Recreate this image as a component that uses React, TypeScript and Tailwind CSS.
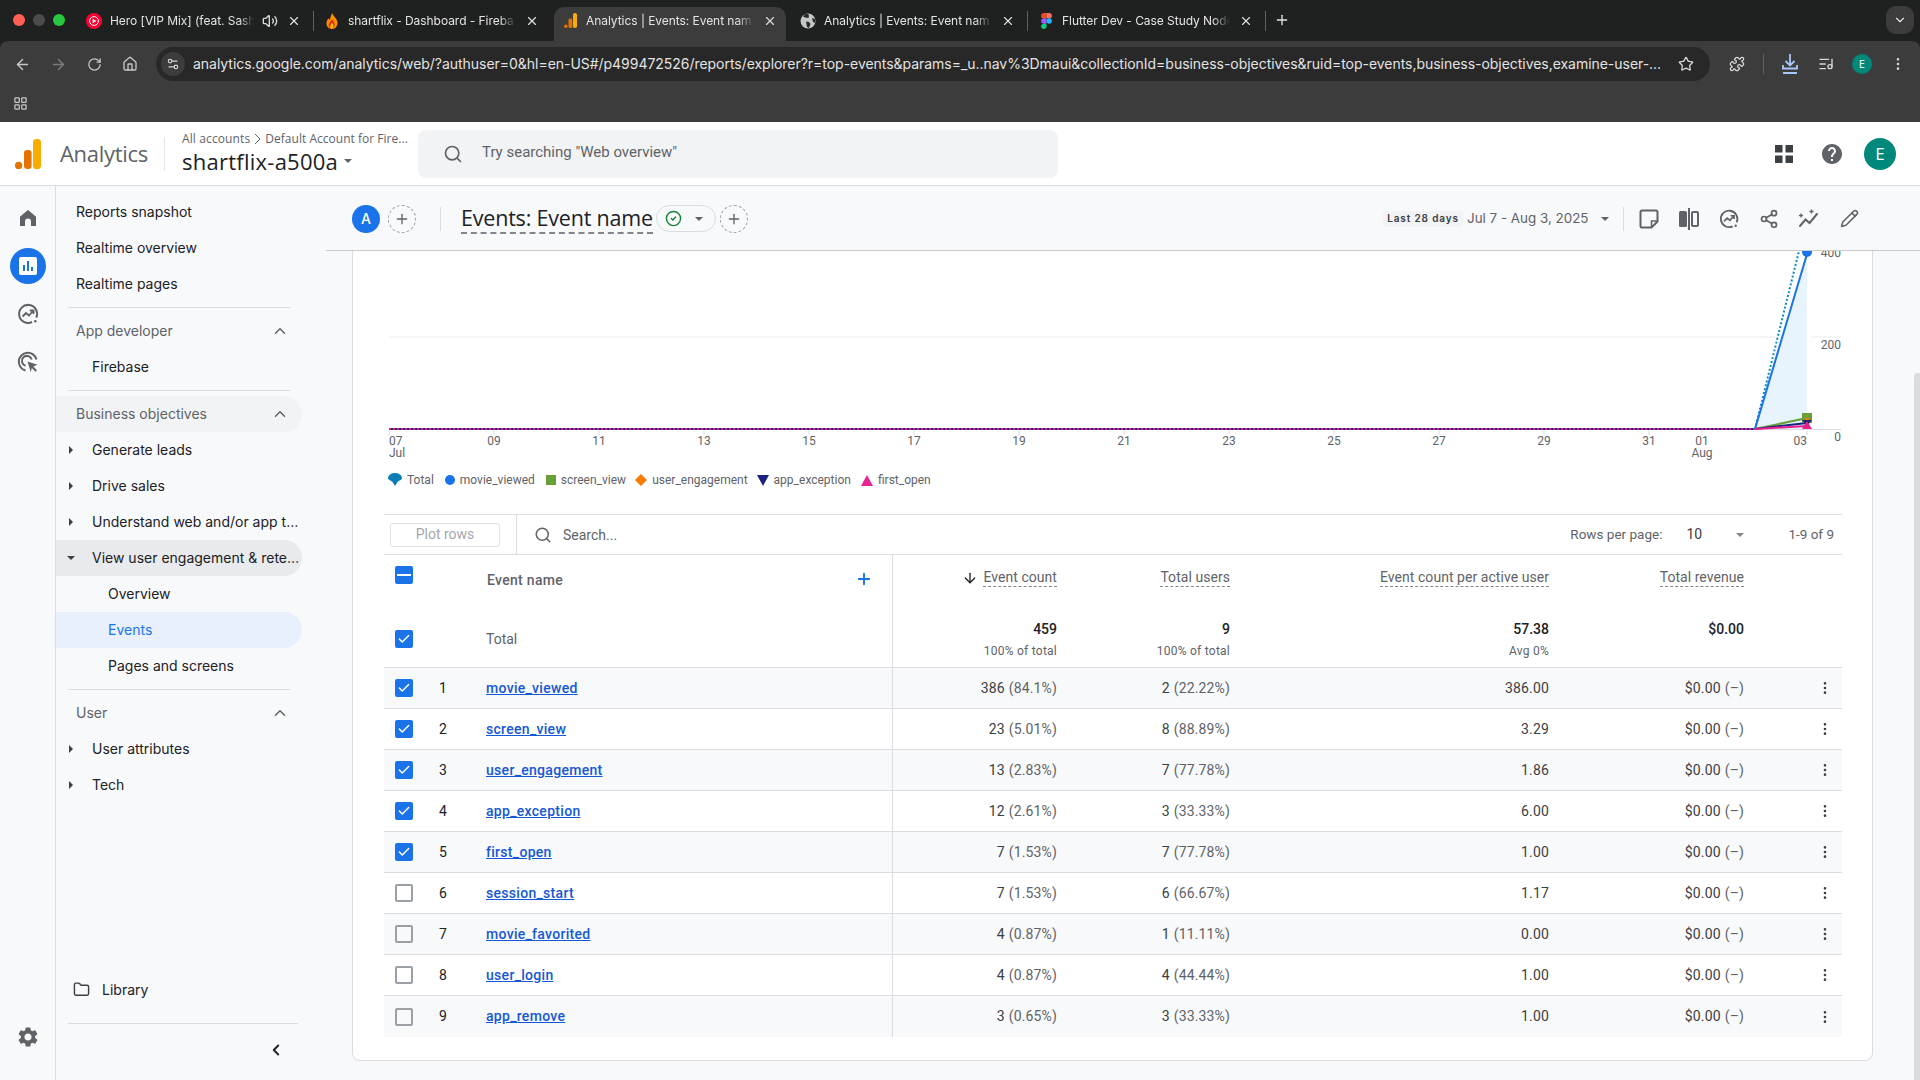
import {
  ArrowDown,
  ArrowLeft,
  ArrowRight,
  Check,
  ChevronDown,
  ChevronLeft,
  ChevronUp,
  CircleCheck,
  Folder,
  LayoutGrid,
  ListMusic,
  MoreVertical,
  Pencil,
  Plus,
  Puzzle,
  RotateCw,
  House,
  Search,
  Settings2,
  Share2,
  Star,
  Volume2,
  X,
} from 'lucide-react';
import type { ReactNode } from 'react';

const rows = [
  ['movie_viewed', '386', '(84.1%)', '2', '(22.22%)', '386.00', true],
  ['screen_view', '23', '(5.01%)', '8', '(88.89%)', '3.29', true],
  ['user_engagement', '13', '(2.83%)', '7', '(77.78%)', '1.86', true],
  ['app_exception', '12', '(2.61%)', '3', '(33.33%)', '6.00', true],
  ['first_open', '7', '(1.53%)', '7', '(77.78%)', '1.00', true],
  ['session_start', '7', '(1.53%)', '6', '(66.67%)', '1.17', false],
  ['movie_favorited', '4', '(0.87%)', '1', '(11.11%)', '0.00', false],
  ['user_login', '4', '(0.87%)', '4', '(44.44%)', '1.00', false],
  ['app_remove', '3', '(0.65%)', '3', '(33.33%)', '1.00', false],
] as const;

const xLabels = ['09', '11', '13', '15', '17', '19', '21', '23', '25', '27', '29', '31'];

const Caret = ({ className = 'border-t-[#5f6368]' }: { className?: string }) => (
  <span className={`inline-block h-0 w-0 border-x-[4px] border-t-[4px] border-x-transparent ${className}`} />
);

const SideCaret = ({ open }: { open?: boolean }) =>
  open ? (
    <span className="absolute left-[11px] top-[16px] h-0 w-0 border-x-[4px] border-t-[4px] border-x-transparent border-t-[#3c4043]" />
  ) : (
    <span className="absolute left-[13px] top-[14px] h-0 w-0 border-y-[4px] border-l-[4px] border-y-transparent border-l-[#3c4043]" />
  );

function GaLogo({ size = 30 }: { size?: number }) {
  return (
    <svg width={(size * 26) / 30} height={size} viewBox="0 0 26 30">
      <circle cx="3.6" cy="26.4" r="3.6" fill="#E37400" />
      <rect x="9" y="11" width="7.6" height="19" rx="3.2" fill="#E37400" />
      <rect x="18" y="0" width="8" height="30" rx="3.6" fill="#F9AB00" />
    </svg>
  );
}

function Tab({ icon, title, active, audio, sep }: { icon: ReactNode; title: string; active?: boolean; audio?: boolean; sep?: boolean }) {
  return (
    <div className="flex h-[34px] w-[238px] shrink-0 items-center">
      <div className={`flex h-full w-[232px] items-center gap-2 pb-[7px] pl-2 pr-2 ${active ? 'rounded-t-[10px] bg-[#3c3c3c]' : ''}`}>
        <span className="flex h-4 w-4 shrink-0 items-center justify-center">{icon}</span>
        <span className="min-w-0 flex-1 overflow-hidden whitespace-nowrap text-[12px] tracking-[-0.05px] text-[#e3e3e3] [mask-image:linear-gradient(to_right,black_90%,transparent)]">
          {title}
        </span>
        {audio && <Volume2 className="h-4 w-4 shrink-0 text-[#dcdcdc]" />}
        <X className="h-4 w-4 shrink-0 p-[1px] text-[#dcdcdc]" />
      </div>
      {sep && <div className="mb-[7px] ml-[3px] h-[20px] w-px bg-[#5f5f5f]" />}
    </div>
  );
}

function BrowserChrome() {
  return (
    <div className="bg-[#1f2020] font-['Inter',sans-serif]">
      <div className="flex h-[41px] items-end">
        <div className="flex h-full w-[78px] shrink-0 items-center gap-2 pb-[2px] pl-[13px]">
          <span className="h-3 w-3 rounded-full bg-[#ff5f57]" />
          <span className="h-3 w-3 rounded-full bg-[#4b4b4b]" />
          <span className="h-3 w-3 rounded-full bg-[#28c840]" />
        </div>
        <Tab
          title="Hero [VIP Mix] (feat. Sash"
          audio
          sep
          icon={
            <svg width="16" height="16" viewBox="0 0 16 16">
              <circle cx="8" cy="8" r="8" fill="#ff0033" />
              <circle cx="8" cy="8" r="4.4" fill="none" stroke="#fff" strokeWidth="1" />
              <path d="M6.6 5.8 10.4 8l-3.8 2.2z" fill="#fff" />
            </svg>
          }
        />
        <Tab
          title="shartflix - Dashboard - Fireba"
          icon={
            <svg width="14" height="16" viewBox="0 0 14 18">
              <path d="M7 0c1 3 5 5.500 6 9.500C14 14 11 18 7 18S0 14.500 1 10c.5-2 1.500-3 2-4 .5 1 1 1.500 1.500 2C5 5.500 6 3 7 0z" fill="#ff9100" />
              <path d="M7 7c1.500 2 3.500 4 3 7-.4 2.200-2 4-3.500 4S2.600 15.500 3.500 12C4 10.500 6 9 7 7z" fill="#dd2c00" />
              <path d="M7 11c1 1 2 2.500 1.500 4.500C8 17 7 18 6.500 18 5 17.500 4.500 15 5.500 13.500 6 12.500 6.500 12 7 11z" fill="#ffc400" />
            </svg>
          }
        />
        <Tab title="Analytics | Events: Event nam" active icon={<GaLogo size={15} />} />
        <Tab
          title="Analytics | Events: Event nam"
          sep
          icon={
            <svg width="16" height="16" viewBox="0 0 16 16">
              <circle cx="8" cy="8" r="7.500" fill="#c4c7c5" />
              <path d="M3 3.500 6.500 5 9 4.500 8.500 1 5 1zM6 8.500l3 .5 1.500 2L9 15l-2-1-.5-3zM12 5l3 1v4l-2-1z" fill="#2a2a2a" />
            </svg>
          }
        />
        <Tab
          title="Flutter Dev - Case Study Node"
          sep
          icon={
            <svg width="11" height="16" viewBox="0 0 12 18">
              <path d="M0 3a3 3 0 0 1 3-3h3v6H3a3 3 0 0 1-3-3z" fill="#f24e1e" />
              <path d="M6 0h3a3 3 0 0 1 0 6H6z" fill="#ff7262" />
              <path d="M0 9a3 3 0 0 1 3-3h3v6H3a3 3 0 0 1-3-3z" fill="#a259ff" />
              <circle cx="9" cy="9" r="3" fill="#1abcfe" />
              <path d="M0 15a3 3 0 0 1 3-3h3v3a3 3 0 0 1-6 0z" fill="#0acf83" />
            </svg>
          }
        />
        <Plus className="mb-[13px] ml-[6px] h-4 w-4 text-[#e3e3e3]" />
        <div className="mb-[7px] ml-auto mr-[6px] flex h-[28px] w-[28px] items-center justify-center rounded-[10px] bg-[#3c3c3c]">
          <ChevronDown className="h-3.5 w-3.5 text-[#e3e3e3]" />
        </div>
      </div>
      <div className="rounded-t-[8px] bg-[#3c3c3c]">
        <div className="flex h-[40px] items-end pl-1">
          <div className="flex h-[34px] w-9 items-center justify-center"><ArrowLeft className="h-[17px] w-[17px] text-[#c7c7c7]" /></div>
          <div className="flex h-[34px] w-9 items-center justify-center"><ArrowRight className="h-[17px] w-[17px] text-[#7b7b7b]" /></div>
          <div className="flex h-[34px] w-9 items-center justify-center"><RotateCw className="h-[15px] w-[15px] text-[#c7c7c7]" /></div>
          <div className="flex h-[34px] w-9 items-center justify-center"><House className="h-4 w-4 text-[#c7c7c7]" /></div>
          <div className="ml-2 flex h-[34px] w-[1554px] shrink-0 items-center rounded-full bg-[#282828] pl-[5px]">
            <span className="flex h-6 w-6 shrink-0 items-center justify-center rounded-full bg-[#3c3c3c]">
              <Settings2 className="h-3.5 w-3.5 text-[#d6d6d6]" />
            </span>
            <span className="ml-2 w-[1472px] shrink-0 whitespace-nowrap pb-[2px] text-[14px] tracking-[-0.035px] text-[#e3e3e3]">
              analytics.google.com/analytics/web/?authuser=0&amp;hl=en-US#/p499472526/reports/explorer?r=top-events&amp;params=_u..nav%3Dmaui&amp;collectionId=business-objectives&amp;ruid=top-events,business-objectives,examine-user-...
            </span>
            <Star className="ml-auto mr-4 h-4 w-4 text-[#d6d6d6]" />
          </div>
          <div className="ml-[9px] flex h-[34px] w-9 items-center justify-center"><Puzzle className="h-4 w-4 text-[#d6d6d6]" /></div>
          <div className="mb-[7px] ml-2 h-5 w-px bg-[#5f5f5f]" />
          <div className="ml-2 flex h-[34px] w-9 items-center justify-center">
            <svg width="18" height="22" viewBox="0 0 18 22" fill="none" stroke="#a8c7fa" strokeWidth="1.800">
              <path d="M9 1v11M4.500 8 9 12.500 13.500 8M2 12v3.500h14V12" />
              <path d="M2 20h14" strokeWidth="2" />
            </svg>
          </div>
          <div className="flex h-[34px] w-9 items-center justify-center"><ListMusic className="h-4 w-4 text-[#d6d6d6]" /></div>
          <div className="flex h-[34px] w-9 items-center justify-center">
            <span className="flex h-5 w-5 items-center justify-center rounded-full bg-[#00897b] text-[10px] text-white">E</span>
          </div>
          <div className="flex h-[34px] w-9 items-center justify-center"><MoreVertical className="h-4 w-4 text-[#d6d6d6]" /></div>
        </div>
        <div className="flex h-[41px] items-center pl-[13px] pt-[4px]">
          <LayoutGrid className="h-[15px] w-[15px] text-[#c7c7c7]" />
        </div>
      </div>
    </div>
  );
}

function AppHeader() {
  return (
    <div className="flex h-[64px] items-center border-b border-[#dadce0] bg-white font-['Open_Sans',sans-serif]">
      <div className="flex w-[60px] pl-[15px]"><GaLogo /></div>
      <div className="w-[104px] pb-[2px] text-[22px] leading-none tracking-[-0.3px] text-[#5f6368]">Analytics</div>
      <div className="h-[34px] w-px bg-[#e3e5e8]" />
      <div className="ml-[17px] w-[236px]">
        <div className="flex items-center gap-[4px] whitespace-nowrap text-[12px] leading-[16px] tracking-[0.12px] text-[#5f6368]">
          All accounts
          <svg width="7" height="12" viewBox="0 0 7 12" fill="none" stroke="#5f6368" strokeWidth="1"><path d="M1 1l5 5-5 5" /></svg>
          <span className="tracking-[0.02px]">Default Account for Fire...</span>
        </div>
        <div className="flex items-center gap-[6px] pb-[2px] text-[22px] leading-[28px] tracking-[0.25px] text-[#202124]">
          shartflix-a500a
          <Caret />
        </div>
      </div>
      <div className="flex h-[48px] w-[640px] items-center rounded-lg bg-[#f1f3f4] pl-[25px]">
        <Search className="h-5 w-5 text-[#5f6368]" />
        <span className="ml-[19px] pb-[2px] font-['Roboto',sans-serif] text-[15px] text-[#5f6368]">Try searching "Web overview"</span>
      </div>
      <div className="ml-auto flex items-center pr-4">
        <div className="flex w-12 justify-center">
          <svg width="20" height="20" viewBox="0 0 20 20" fill="#3c4043">
            <rect x="1" y="1" width="7.500" height="7.500" />
            <rect x="11.500" y="1" width="7.500" height="7.500" />
            <rect x="1" y="11.500" width="7.500" height="7.500" />
            <rect x="11.500" y="11.500" width="7.500" height="7.500" />
          </svg>
        </div>
        <div className="flex w-12 justify-center">
          <svg width="24" height="24" viewBox="0 0 24 24" fill="#5f6368">
            <path d="M12 2C6.480 2 2 6.480 2 12s4.480 10 10 10 10-4.480 10-10S17.520 2 12 2zm1 17h-2v-2h2v2zm2.070-7.750l-.9.920C13.450 12.900 13 13.500 13 15h-2v-.5c0-1.100.450-2.100 1.170-2.830l1.240-1.260c.370-.360.590-.860.590-1.410 0-1.100-.9-2-2-2s-2 .9-2 2H8c0-2.210 1.790-4 4-4s4 1.790 4 4c0 .880-.360 1.680-.93 2.250z" />
          </svg>
        </div>
        <div className="flex w-12 justify-center">
          <span className="flex h-8 w-8 items-center justify-center rounded-full bg-[#00897b] text-[17px] text-white">E</span>
        </div>
      </div>
    </div>
  );
}

function Rail() {
  return (
    <div className="flex w-[56px] shrink-0 flex-col items-center border-r border-[#dadce0] pt-2">
      <div className="flex h-12 items-center justify-center">
        <svg width="24" height="24" viewBox="0 0 24 24" fill="#5f6368">
          <path d="M4 20v-8.800c0-.4.2-.8.500-1L12 4l7.500 6.200c.3.200.5.600.5 1V20h-5v-4.500a3 3 0 0 0-6 0V20z" />
        </svg>
      </div>
      <div className="flex h-12 items-center justify-center">
        <div className="flex h-9 w-9 items-center justify-center rounded-full bg-[#1a73e8]">
          <svg width="18" height="18" viewBox="0 0 18 18">
            <rect width="18" height="18" rx="2" fill="#fff" />
            <rect x="4" y="8" width="2" height="6" fill="#1a73e8" />
            <rect x="8" y="4" width="2" height="10" fill="#1a73e8" />
            <rect x="12" y="10" width="2" height="4" fill="#1a73e8" />
          </svg>
        </div>
      </div>
      <div className="flex h-12 items-center justify-center">
        <svg width="24" height="24" viewBox="0 0 24 24" fill="none" stroke="#5f6368" strokeWidth="2">
          <path d="M20.300 15.600A9 9 0 1 0 16 20" />
          <path d="M6.500 14.500l3.500-3.500 3 2.500 4-4.500M13.800 8.500H17.500V12" strokeWidth="1.800" />
          <circle cx="19.300" cy="19.300" r="1.300" fill="#5f6368" stroke="none" />
        </svg>
      </div>
      <div className="flex h-12 items-center justify-center">
        <svg width="24" height="24" viewBox="0 0 24 24" fill="none" stroke="#5f6368" strokeWidth="2">
          <path d="M20.500 9.500A9 9 0 1 0 9.500 20.500" />
          <path d="M15.700 9.500A5 5 0 1 0 9.500 15.700" />
          <path d="M11.500 11.500l10 3.300-4.200 1.700 3.700 3.700-1.500 1.500-3.700-3.700-1 4.200z" fill="#5f6368" stroke="none" />
        </svg>
      </div>
      <svg className="mb-[31px] mt-auto" width="24" height="24" viewBox="0 0 24 24" fill="#5f6368">
        <path d="M19.140 12.940c.040-.3.060-.61.060-.94 0-.32-.02-.64-.07-.94l2.030-1.580c.180-.14.230-.41.120-.61l-1.920-3.320c-.12-.22-.37-.29-.59-.22l-2.390.960c-.5-.38-1.030-.7-1.620-.94l-.36-2.540c-.04-.24-.24-.41-.48-.41h-3.840c-.24 0-.43.170-.47.410l-.36 2.540c-.59.240-1.130.570-1.620.940l-2.390-.96c-.22-.08-.47 0-.59.220L2.740 8.870c-.12.210-.08.470.120.610l2.030 1.580c-.05.300-.09.630-.09.940s.020.640.070.940l-2.030 1.580c-.18.140-.23.410-.12.610l1.920 3.320c.120.220.370.290.590.220l2.390-.96c.5.380 1.030.7 1.620.94l.360 2.540c.050.240.240.410.480.410h3.840c.240 0 .440-.17.470-.41l.360-2.540c.590-.24 1.130-.56 1.620-.94l2.390.960c.220.080.470 0 .590-.22l1.920-3.320c.120-.22.070-.47-.12-.61l-2.010-1.580zM12 15.600c-1.980 0-3.600-1.620-3.600-3.600s1.620-3.600 3.600-3.600 3.600 1.620 3.600 3.600-1.620 3.600-3.600 3.600z" />
      </svg>
    </div>
  );
}

function NavRow({ children, indent = 20, bg = '', color = 'text-[#202124]', caret, open, chevron }: { children: ReactNode; indent?: number; bg?: string; color?: string; caret?: boolean; open?: boolean; chevron?: boolean }) {
  return (
    <div className={`relative flex h-9 w-[246px] items-center overflow-hidden whitespace-nowrap rounded-r-full pb-[2px] text-[14px] ${bg} ${color}`} style={{ paddingLeft: indent }}>
      {caret && <SideCaret open={open} />}
      {children}
      {chevron && <ChevronUp className="absolute left-[215px] top-[9px] h-[18px] w-[18px] text-[#5f6368]" />}
    </div>
  );
}

const Rule = () => <div className="mx-3 my-[5px] h-px w-[222px] bg-[#dadce0]" />;

function Sidebar() {
  return (
    <div className="flex w-[270px] shrink-0 flex-col pt-2 font-['Inter',sans-serif]">
      <NavRow>Reports snapshot</NavRow>
      <NavRow>Realtime overview</NavRow>
      <NavRow>Realtime pages</NavRow>
      <Rule />
      <NavRow color="text-[#5f6368]" chevron>App developer</NavRow>
      <NavRow indent={36}>Firebase</NavRow>
      <Rule />
      <NavRow color="text-[#5f6368]" bg="bg-[#f1f3f4]" chevron>Business objectives</NavRow>
      <NavRow indent={36} caret>Generate leads</NavRow>
      <NavRow indent={36} caret>Drive sales</NavRow>
      <NavRow indent={36} caret>Understand web and/or app t…</NavRow>
      <NavRow indent={36} caret open bg="bg-[#e8eaed]">View user engagement &amp; rete…</NavRow>
      <NavRow indent={52}>Overview</NavRow>
      <NavRow indent={52} bg="bg-[#e8f0fe]" color="text-[#1a73e8]">Events</NavRow>
      <NavRow indent={52}>Pages and screens</NavRow>
      <Rule />
      <NavRow color="text-[#5f6368]" chevron>User</NavRow>
      <NavRow indent={36} caret>User attributes</NavRow>
      <NavRow indent={36} caret>Tech</NavRow>
      <div className="mt-auto">
        <div className="flex h-9 items-center pb-[2px] pl-[17px] text-[14px] text-[#202124]">
          <Folder className="h-[17px] w-[17px] text-[#3c4043]" />
          <span className="ml-[12px]">Library</span>
        </div>
        <div className="ml-3 mt-[15px] h-px w-[230px] bg-[#dadce0]" />
        <div className="flex h-[56px] pl-[211px] pt-[17px]">
          <ChevronLeft className="h-[18px] w-[18px] text-[#202124]" strokeWidth={2.5} />
        </div>
      </div>
    </div>
  );
}

function ReportBar() {
  return (
    <div className="flex h-[65px] shrink-0 items-center border-b border-[#c8cacd] pl-[26px] pr-[51px] pt-[1px]">
      <span className="flex h-7 w-7 items-center justify-center rounded-full bg-[#1a73e8] font-['Inter',sans-serif] text-[14px] font-medium text-white">A</span>
      <span className="ml-2 flex h-7 w-7 items-center justify-center rounded-full border border-dashed border-[#9aa0a6]"><Plus className="h-4 w-4 text-[#5f6368]" /></span>
      <div className="ml-6 h-[24px] w-px bg-[#dadce0]" />
      <div className="ml-5 whitespace-nowrap border-b-2 border-dashed border-[#80868b] font-['Open_Sans',sans-serif] text-[21.500px] leading-[28px] tracking-[-0.2px] text-[#202124]">Events: Event name</div>
      <div className="ml-[3px] flex h-[27px] w-[60px] items-center rounded-full border border-[#dadce0] pl-[8px]">
        <CircleCheck className="h-[17px] w-[17px] text-[#188038]" />
        <span className="ml-[13px] flex"><Caret className="border-t-[#5f6368]" /></span>
      </div>
      <span className="ml-[4px] flex h-7 w-7 items-center justify-center rounded-full border border-dashed border-[#9aa0a6]"><Plus className="h-4 w-4 text-[#5f6368]" /></span>
      <div className="ml-auto flex items-center">
        <span className="flex h-[16px] w-[80px] items-center justify-center rounded-[2px] bg-[#f1f3f4] font-['Inter',sans-serif] text-[10px] font-semibold tracking-[0.85px] text-[#3c4043]">Last 28 days</span>
        <span className="ml-[4px] w-[134px] whitespace-nowrap font-['Inter',sans-serif] text-[13.400px] text-[#5f6368]">Jul 7 - Aug 3, 2025</span>
        <Caret />
        <div className="ml-[14px] mr-[5px] h-[24px] w-px bg-[#dadce0]" />
        <div className="flex w-10 justify-center">
          <svg width="20" height="20" viewBox="0 0 20 20" fill="none" stroke="#5f6368" strokeWidth="2">
            <path d="M3 1.500h14a1.500 1.500 0 0 1 1.500 1.500v9.500l-6 6H3A1.500 1.500 0 0 1 1.500 17V3A1.500 1.500 0 0 1 3 1.500z" />
            <path d="M18 12h-5.500v6" strokeWidth="1.500" />
          </svg>
        </div>
        <div className="flex w-10 justify-center">
          <svg width="22" height="22" viewBox="0 0 22 22" fill="#5f6368">
            <rect x="1" y="3" width="8" height="16" rx="1.500" />
            <rect x="10" y="0" width="2" height="22" />
            <rect x="14" y="4" width="6" height="14" rx="1" fill="none" stroke="#5f6368" strokeWidth="2" />
          </svg>
        </div>
        <div className="flex w-10 justify-center">
          <svg width="22" height="22" viewBox="0 0 24 24" fill="none" stroke="#5f6368" strokeWidth="2">
            <path d="M20.300 15.600A9 9 0 1 0 16 20" />
            <path d="M6.500 14.500l3.500-3.500 3 2.500 4-4.500M13.800 8.500H17.500V12" strokeWidth="1.800" />
            <circle cx="19.300" cy="19.300" r="1.300" fill="#5f6368" stroke="none" />
          </svg>
        </div>
        <div className="flex w-10 justify-center"><Share2 className="h-5 w-5 text-[#5f6368]" /></div>
        <div className="flex w-10 justify-center">
          <svg width="22" height="22" viewBox="0 0 22 22" fill="none" stroke="#5f6368" strokeWidth="2" strokeLinecap="round">
            <path d="M2 18l5.500-6.500 4 3.500L19 6" />
            <path d="M3 6v3M1.500 7.500h3M13.500 2v3M12 3.500h3" strokeWidth="1.300" />
          </svg>
        </div>
        <div className="flex w-10 justify-center"><Pencil className="h-[19px] w-[19px] text-[#5f6368]" /></div>
      </div>
    </div>
  );
}

function Chart() {
  return (
    <svg className="block" width="1520" height="219" viewBox="353 251 1520 219" fontFamily="Roboto, sans-serif" fontSize="12" fill="#5f6368">
      <line x1="389" y1="337" x2="1807" y2="337" stroke="#e8eaed" />
      <line x1="1811" y1="337" x2="1841" y2="337" stroke="#e8eaed" />
      <line x1="389" y1="429.500" x2="1841" y2="429.500" stroke="#dadce0" />
      {[389, ...xLabels.map((_, i) => 494 + i * 105), 1702, 1807].map((x) => (
        <line key={x} x1={x} y1="430" x2={x} y2="435" stroke="#dadce0" />
      ))}
      <polygon points="1755,429 1807,253 1807,429" fill="#e8f4fd" />
      <line x1="389" y1="429" x2="1755" y2="429" stroke="#1a237e" strokeWidth="2" />
      <line x1="389" y1="429" x2="1755" y2="429" stroke="#e91e8c" strokeWidth="2" strokeDasharray="2 2" />
      <line x1="1755" y1="429" x2="1799" y2="251" stroke="#0b8ec2" strokeWidth="2" strokeDasharray="2 2" />
      <line x1="1755" y1="429" x2="1807" y2="254" stroke="#1a73e8" strokeWidth="2" />
      <line x1="1755" y1="429" x2="1807" y2="418" stroke="#689f38" strokeWidth="2" />
      <line x1="1755" y1="429" x2="1807" y2="423" stroke="#1a237e" strokeWidth="2" />
      <line x1="1755" y1="429" x2="1807" y2="426" stroke="#e91e8c" strokeWidth="2" />
      <circle cx="1807" cy="252" r="5" fill="#1a73e8" />
      <rect x="1802" y="413" width="10" height="10" fill="#689f38" />
      <polygon points="1807,417 1811,421 1807,425 1803,421" fill="#f57c00" />
      <polygon points="1802,420 1812,420 1807,426" fill="#1a237e" />
      <polygon points="1807,421 1812,429 1802,429" fill="#e91e8c" />
      <text x="389" y="445">07</text>
      <text x="389" y="457">Jul</text>
      {xLabels.map((d, i) => (
        <text key={d} x={494 + i * 105} y="445" textAnchor="middle">{d}</text>
      ))}
      <text x="1702" y="445" textAnchor="middle">01</text>
      <text x="1702" y="457" textAnchor="middle">Aug</text>
      <text x="1807" y="445" textAnchor="end">03</text>
      <text x="1841" y="257" textAnchor="end">400</text>
      <text x="1841" y="349" textAnchor="end">200</text>
      <text x="1841" y="441" textAnchor="end">0</text>
    </svg>
  );
}

function Legend() {
  return (
    <div className="flex h-5 items-center pl-[35px] font-['Roboto',sans-serif] text-[12px] text-[#5f6368]">
      <svg width="14" height="14" viewBox="0 0 14 14"><path d="M0 5a7 5 0 0 1 14 0c0 2-3 2.500-4.500 4L7 13 4.500 9C3 7.500 0 7 0 5z" fill="#0b7fb5" /></svg>
      <span className="ml-[5px]">Total</span>
      <span className="ml-[11px] h-[10px] w-[10px] rounded-full bg-[#1a73e8]" />
      <span className="ml-[5px]">movie_viewed</span>
      <span className="ml-[11px] h-[10px] w-[10px] bg-[#689f38]" />
      <span className="ml-[5px]">screen_view</span>
      <svg className="ml-[9px]" width="12" height="12" viewBox="0 0 12 12"><polygon points="6,0 12,6 6,12 0,6" fill="#f57c00" /></svg>
      <span className="ml-[5px]">user_engagement</span>
      <svg className="ml-[9px]" width="12" height="11" viewBox="0 0 12 11"><polygon points="0,0 12,0 6,11" fill="#1a237e" /></svg>
      <span className="ml-[5px]">app_exception</span>
      <svg className="ml-[10px]" width="12" height="11" viewBox="0 0 12 11"><polygon points="6,0 12,11 0,11" fill="#e52592" /></svg>
      <span className="ml-[5px]">first_open</span>
    </div>
  );
}

function Checkbox({ checked, dash }: { checked?: boolean; dash?: boolean }) {
  if (dash) {
    return (
      <span className="flex h-[18px] w-[18px] shrink-0 items-center justify-center rounded-[2px] bg-[#1a73e8]">
        <span className="h-[2px] w-[14px] bg-white" />
      </span>
    );
  }
  if (checked) {
    return (
      <span className="flex h-[18px] w-[18px] shrink-0 items-center justify-center rounded-[2px] bg-[#1a73e8]">
        <Check className="h-[14px] w-[14px] text-white" strokeWidth={2.5} />
      </span>
    );
  }
  return <span className="h-[18px] w-[18px] shrink-0 rounded-[2px] border-2 border-[#9aa0a6]" />;
}

const gridCols = 'grid grid-cols-[509px_164px_173px_319px_195px_98px]';

const HeadCell = ({ children }: { children: ReactNode }) => (
  <div className="pt-[12px] text-right">
    <span className="inline-block border-b border-dashed border-[#80868b] leading-[18px] tracking-[0.05px] text-[#5f6368]">{children}</span>
  </div>
);

const TotalCell = ({ value, sub }: { value: string; sub?: string }) => (
  <div className="pt-[15px] text-right">
    <div className="font-medium leading-[18px] text-[#202124]">{value}</div>
    {sub && <div className="mt-[5px] text-[12px] leading-[16px] tracking-[0.25px] text-[#5f6368]">{sub}</div>}
  </div>
);

function Table() {
  return (
    <div className="ml-[31px] mt-6 w-[1458px] font-['Roboto',sans-serif] text-[14px] text-[#3c4043]">
      <div className="flex h-[41px] items-center border-y border-[#dadce0]">
        <div className="ml-[6px] flex h-[24px] w-[110px] items-center justify-center rounded-[3px] border border-[#e0e0e0] text-[14px] text-[#a5a8ad]">Plot rows</div>
        <div className="ml-[16px] h-full w-px bg-[#dadce0]" />
        <Search className="ml-[17px] h-[18px] w-[18px] text-[#5f6368]" />
        <span className="ml-[11px] pt-[1px] text-[#5f6368]">Search...</span>
        <div className="ml-auto flex items-center pr-[8px] text-[13.500px] text-[#5f6368]">
          <span>Rows per page:</span>
          <span className="ml-[24px] w-[50px] text-[14px] text-[#3c4043]">10</span>
          <Caret className="border-t-[#80868b]" />
          <span className="ml-[44px]">1-9 of 9</span>
        </div>
      </div>
      <div className="border-b border-[#dadce0]">
        <div className={`${gridCols} h-[50px]`}>
          <div className="relative flex border-r border-[#dadce0] pl-[11px] pt-[11px]">
            <Checkbox dash />
            <span className="ml-[74px] mt-[5px] font-medium leading-[18px] tracking-[0.3px] text-[#5f6368]">Event name</span>
            <Plus className="absolute left-[471px] top-[15px] h-[18px] w-[18px] text-[#1a73e8]" strokeWidth={2.5} />
          </div>
          <HeadCell>
            <span className="relative">
              <ArrowDown className="absolute left-[-21px] top-[1px] h-4 w-4 text-[#202124]" />
              Event count
            </span>
          </HeadCell>
          <HeadCell>Total users</HeadCell>
          <HeadCell>Event count per active user</HeadCell>
          <HeadCell>Total revenue</HeadCell>
          <div />
        </div>
        <div className={`${gridCols} h-[62px]`}>
          <div className="flex border-r border-[#dadce0] pl-[11px] pt-[25px]">
            <Checkbox checked />
            <span className="ml-[73px] leading-[18px] text-[#5f6368]">Total</span>
          </div>
          <TotalCell value="459" sub="100% of total" />
          <TotalCell value="9" sub="100% of total" />
          <TotalCell value="57.38" sub="Avg 0%" />
          <TotalCell value="$0.00" />
          <div />
        </div>
      </div>
      {rows.map((r, i) => (
        <div key={r[0]} className={`${gridCols} h-[41px] ${i < rows.length - 1 ? 'border-b border-[#dadce0]' : ''} ${i % 2 === 0 ? 'bg-[#f8f9fa]' : 'bg-white'}`}>
          <div className="flex items-center border-r border-[#dadce0] pl-[11px]">
            <Checkbox checked={r[6]} />
            <span className="ml-[26px] w-[47px] text-[#202124]">{i + 1}</span>
            <a className="font-medium tracking-[0.3px] text-[#1558d6] underline">{r[0]}</a>
          </div>
          <div className="flex items-center justify-end gap-1 tracking-[0.15px]">
            <span>{r[1]}</span>
            <span className="text-[#5f6368]">{r[2]}</span>
          </div>
          <div className="flex items-center justify-end gap-1 tracking-[0.15px]">
            <span>{r[3]}</span>
            <span className="text-[#5f6368]">{r[4]}</span>
          </div>
          <div className="flex items-center justify-end tracking-[0.15px]">{r[5]}</div>
          <div className="flex items-center justify-end gap-1 tracking-[0.15px]">
            <span>$0.00</span>
            <span className="text-[#5f6368]">(–)</span>
          </div>
          <div className="flex items-center pl-[73px]">
            <MoreVertical className="h-4 w-4 text-[#3c4043]" />
          </div>
        </div>
      ))}
    </div>
  );
}

export default function App() {
  return (
    <div className="flex h-[1080px] w-[1920px] flex-col overflow-hidden bg-[#f8f9fb]">
      <BrowserChrome />
      <AppHeader />
      <div className="flex min-h-0 flex-1">
        <Rail />
        <Sidebar />
        <div className="relative flex min-w-0 flex-1 flex-col">
          <ReportBar />
          <div className="pl-[26px]">
            <div className="h-[810px] w-[1521px] rounded-b-lg border border-t-0 border-[#dadce0] bg-white">
              <Chart />
              <Legend />
              <Table />
            </div>
          </div>
          <div className="absolute bottom-0 right-0 top-[187px] w-[6px] rounded-tl-[4px] bg-[#dadce0]" />
        </div>
      </div>
    </div>
  );
}
